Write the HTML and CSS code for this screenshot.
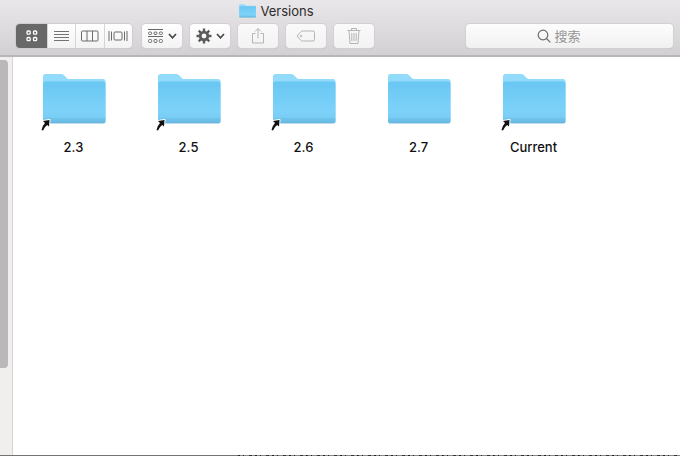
FILE: index.html
```html
<!DOCTYPE html>
<html lang="zh-CN">
<head>
<meta charset="utf-8">
<title>Versions</title>
<link rel="stylesheet" href="styles.css">
</head>
<body>
<svg class="defs" width="0" height="0" aria-hidden="true">
  <defs>
    <linearGradient id="front" x1="0" y1="0" x2="0" y2="1">
      <stop offset="0" stop-color="#69c7f3"/>
      <stop offset="0.7" stop-color="#7dd2f9"/>
      <stop offset="0.87" stop-color="#79cdf5"/>
      <stop offset="0.88" stop-color="#70c3eb"/>
      <stop offset="1" stop-color="#69bbe4"/>
    </linearGradient>
    <symbol id="folder" viewBox="0 0 64 52">
      <path d="M1 49V3.500Q1 1 3.500 1H19Q21 1 22 2.200L25 5.200Q25.700 6 27 6H61Q63.500 6 63.500 8.500V49Z" fill="#93dbfa"/>
      <path d="M1 10.500Q1 8.500 3 8.500H61.500Q63.500 8.500 63.500 10.500V48.500Q63.500 50 62 50H2.500Q1 50 1 48.500Z" fill="url(#front)"/>
      <path d="M2 50H62.500" stroke="#62aed5" stroke-width="0.800"/>
    </symbol>
    <symbol id="alias" viewBox="0 0 12 14">
      <path d="M3 3L9.500 2L9 8.500L7.200 7Q4.300 9 3 12.500L1.500 12Q2 8 5 4.900Z" fill="#111" stroke="#fff" stroke-width="2" stroke-linejoin="round" paint-order="stroke"/>
    </symbol>
  </defs>
</svg>
<div class="window">
  <header class="titlebar">
    <h1 class="title"><svg class="title-icon" aria-hidden="true"><use href="#folder"/></svg>Versions</h1>
    <div class="toolbar">
      <div class="segments">
        <button class="seg active" aria-label="Icons"><svg width="12" height="12" fill="none" stroke="#fff" stroke-width="1.300"><rect x="1" y="1" width="3.200" height="3.200" rx="1"/><rect x="7.500" y="1" width="3.200" height="3.200" rx="1"/><rect x="1" y="7.500" width="3.200" height="3.200" rx="1"/><rect x="7.500" y="7.500" width="3.200" height="3.200" rx="1"/></svg></button>
        <button class="seg" aria-label="List"><svg width="16" height="12" stroke="#737373"><path d="M0 1.500H15M0 4.500H15M0 7.500H15M0 10.500H15"/></svg></button>
        <button class="seg" aria-label="Columns"><svg width="18" height="12" fill="none" stroke="#6b6b6b"><rect x="0.500" y="1" width="16.500" height="10" rx="1"/><path d="M6 1V11M11.500 1V11"/></svg></button>
        <button class="seg" aria-label="Cover flow"><svg width="20" height="12" fill="none" stroke="#6b6b6b"><rect x="6" y="2" width="8" height="8" rx="1"/><path d="M1 1V11M3.500 1.500V10.500M16.500 1.500V10.500M19 1V11"/></svg></button>
      </div>
      <button class="tool" aria-label="Arrange">
        <svg width="16" height="15" fill="none" stroke="#686868"><path d="M0 0.500H15M0 7.500H15"/><rect x="0.600" y="3" width="3" height="2.500" rx="1"/><rect x="6" y="3" width="3" height="2.500" rx="1"/><rect x="11.400" y="3" width="3" height="2.500" rx="1"/><rect x="0.600" y="10.500" width="3" height="3" rx="1"/><rect x="6" y="10.500" width="3" height="3" rx="1"/><rect x="11.400" y="10.500" width="3" height="3" rx="1"/></svg>
        <svg width="9" height="6" fill="none" stroke="#444" stroke-width="1.600"><path d="M1 1L4.500 4.800L8 1"/></svg>
      </button>
      <button class="tool" aria-label="Action">
        <svg width="16" height="16" viewBox="-8 -8 16 16" fill="none" stroke="#5b5b5b"><circle r="3.800" stroke-width="2.800"/><path d="M0-7.500V-4M0 4V7.500M-7.500 0H-4M4 0H7.500M-5.300-5.300L-3-3M3 3L5.300 5.300M-5.300 5.300L-3 3M3-3L5.300-5.300" stroke-width="2.400"/></svg>
        <svg width="9" height="6" fill="none" stroke="#444" stroke-width="1.600"><path d="M1 1L4.500 4.800L8 1"/></svg>
      </button>
      <button class="tool" aria-label="Share" disabled><svg width="14" height="18" fill="none" stroke="#b5b5b5"><path d="M4.500 6.500H1.500V16H12.500V6.500H9.500M7 11.500V1.500M4 4.500L7 1.500L10 4.500"/></svg></button>
      <button class="tool" aria-label="Tags" disabled><svg width="20" height="12" fill="none" stroke="#b5b5b5"><path d="M1 6L5 1.500Q5.500 1 6.500 1H17Q18.500 1 18.500 2.500V9.500Q18.500 11 17 11H6.500Q5.500 11 5 10.500Z"/><circle cx="5" cy="6" r="0.800"/></svg></button>
      <button class="tool" aria-label="Delete" disabled><svg width="14" height="18" fill="none" stroke="#b5b5b5"><path d="M0.500 3.500H13.500M4.500 3.500V1.500H9.500V3.500M2 3.500L3 16.500H11L12 3.500M4.800 6V14M7 6V14M9.200 6V14"/></svg></button>
      <label class="search">
        <svg width="14" height="14" fill="none" stroke="#6b6b6b" stroke-width="1.200" aria-hidden="true"><circle cx="6" cy="6" r="4.800"/><path d="M9.500 9.500L13.300 13.300"/></svg>
        <input type="search" placeholder="搜索" aria-label="搜索">
      </label>
    </div>
  </header>
  <div class="body">
    <aside class="sidebar"><div class="thumb"></div></aside>
    <main class="files">
      <a class="file" href="#"><span class="icon"><svg class="folder"><use href="#folder"/></svg><svg class="alias"><use href="#alias"/></svg></span>2.3</a>
      <a class="file" href="#"><span class="icon"><svg class="folder"><use href="#folder"/></svg><svg class="alias"><use href="#alias"/></svg></span>2.5</a>
      <a class="file" href="#"><span class="icon"><svg class="folder"><use href="#folder"/></svg><svg class="alias"><use href="#alias"/></svg></span>2.6</a>
      <a class="file" href="#"><span class="icon"><svg class="folder"><use href="#folder"/></svg></span>2.7</a>
      <a class="file" href="#"><span class="icon"><svg class="folder"><use href="#folder"/></svg><svg class="alias"><use href="#alias"/></svg></span>Current</a>
    </main>
  </div>
  <div class="edge"><div class="specks"></div></div>
</div>
</body>
</html>
```
FILE: styles.css
```css
* {
  box-sizing: border-box;
}

body {
  margin: 0;
  font-family: Inter, "Noto Sans CJK SC", sans-serif;
  color: #111;
  background: #fff;
}

svg {
  display: block;
  flex: none;
}

.defs {
  position: absolute;
}

.window {
  display: flex;
  flex-direction: column;
  min-height: 100vh;
}

.titlebar {
  padding-bottom: 7px;
  background: linear-gradient(#e9e7e9, #d3d0d3);
  border-bottom: 2px solid #b9b6b9;
}

.title {
  display: flex;
  align-items: center;
  justify-content: center;
  gap: 4px;
  height: 24px;
  margin: 0;
  padding-right: 127px;
  padding-bottom: 2px;
  font-size: 13px;
  font-weight: 400;
  color: #2b2b2b;
}

.title-icon {
  width: 17px;
  height: 14px;
}

.toolbar {
  display: flex;
  gap: 8px;
  padding: 0 7px 0 16px;
}

button {
  margin: 0;
  padding: 0;
  border: 0;
  display: flex;
  align-items: center;
  justify-content: center;
}

.segments {
  display: flex;
  width: 116px;
  margin-right: 2px;
  border-radius: 4px;
  overflow: hidden;
  box-shadow: 0 0 0 1px #d0cdd0, 0 1px 1px #b5b2b5;
}

.seg {
  flex: 1;
  height: 24px;
  background: linear-gradient(#fff, #f3f3f3);
  border-left: 1px solid #d5d5d5;
}

.seg.active {
  flex: none;
  width: 31px;
  background: #686868;
  border-left: 0;
}

.tool {
  width: 40px;
  height: 24px;
  gap: 4px;
  border-radius: 4px;
  background: linear-gradient(#fff, #f3f3f3);
  box-shadow: 0 0 0 1px #d3d0d3, 0 1px 1px #b5b2b5;
}

.tool:disabled {
  background: linear-gradient(#fafafa, #f2f2f2);
}

.search {
  display: flex;
  align-items: center;
  justify-content: center;
  gap: 4px;
  width: 207px;
  height: 24px;
  margin-left: auto;
  border-radius: 4px;
  background: linear-gradient(#fdfdfd, #f1f1f1);
  box-shadow: 0 0 0 1px #d3d0d3, 0 1px 1px #b5b2b5;
}

.search input {
  width: 48px;
  padding: 0;
  border: 0;
  outline: 0;
  background: none;
  font: 13px/20px "Noto Sans CJK SC", sans-serif;
}

.search input::placeholder {
  color: #969696;
  opacity: 1;
}

.body {
  display: flex;
  flex: 1;
}

.sidebar {
  width: 13px;
  padding-top: 3px;
  background: #f1eeee;
  border-right: 1px solid #d7d4d5;
}

.thumb {
  width: 8px;
  height: 78%;
  border-radius: 0 4px 4px 0;
  background: #bab8b9;
}

.files {
  flex: 1;
  display: grid;
  grid-template-columns: repeat(auto-fill, 115px);
  align-content: start;
  padding: 16px 3px;
}

.file {
  display: flex;
  flex-direction: column;
  align-items: center;
  gap: 13px;
  font-size: 13px;
  line-height: 18px;
  font-weight: 500;
  color: #111;
  text-decoration: none;
}

.icon {
  position: relative;
}

.folder {
  width: 64px;
  height: 52px;
}

.alias {
  position: absolute;
  left: -2px;
  bottom: -7px;
  width: 12px;
  height: 14px;
}

.edge {
  height: 1px;
  background: #747274;
}

.specks {
  height: 1px;
  margin-left: 35%;
  background: repeating-linear-gradient(90deg, #222 0 2px, #8a888a 2px 5px, #222 5px 6px, #8a888a 6px 11px, #333 11px 14px, #8a888a 14px 17px);
}
```
